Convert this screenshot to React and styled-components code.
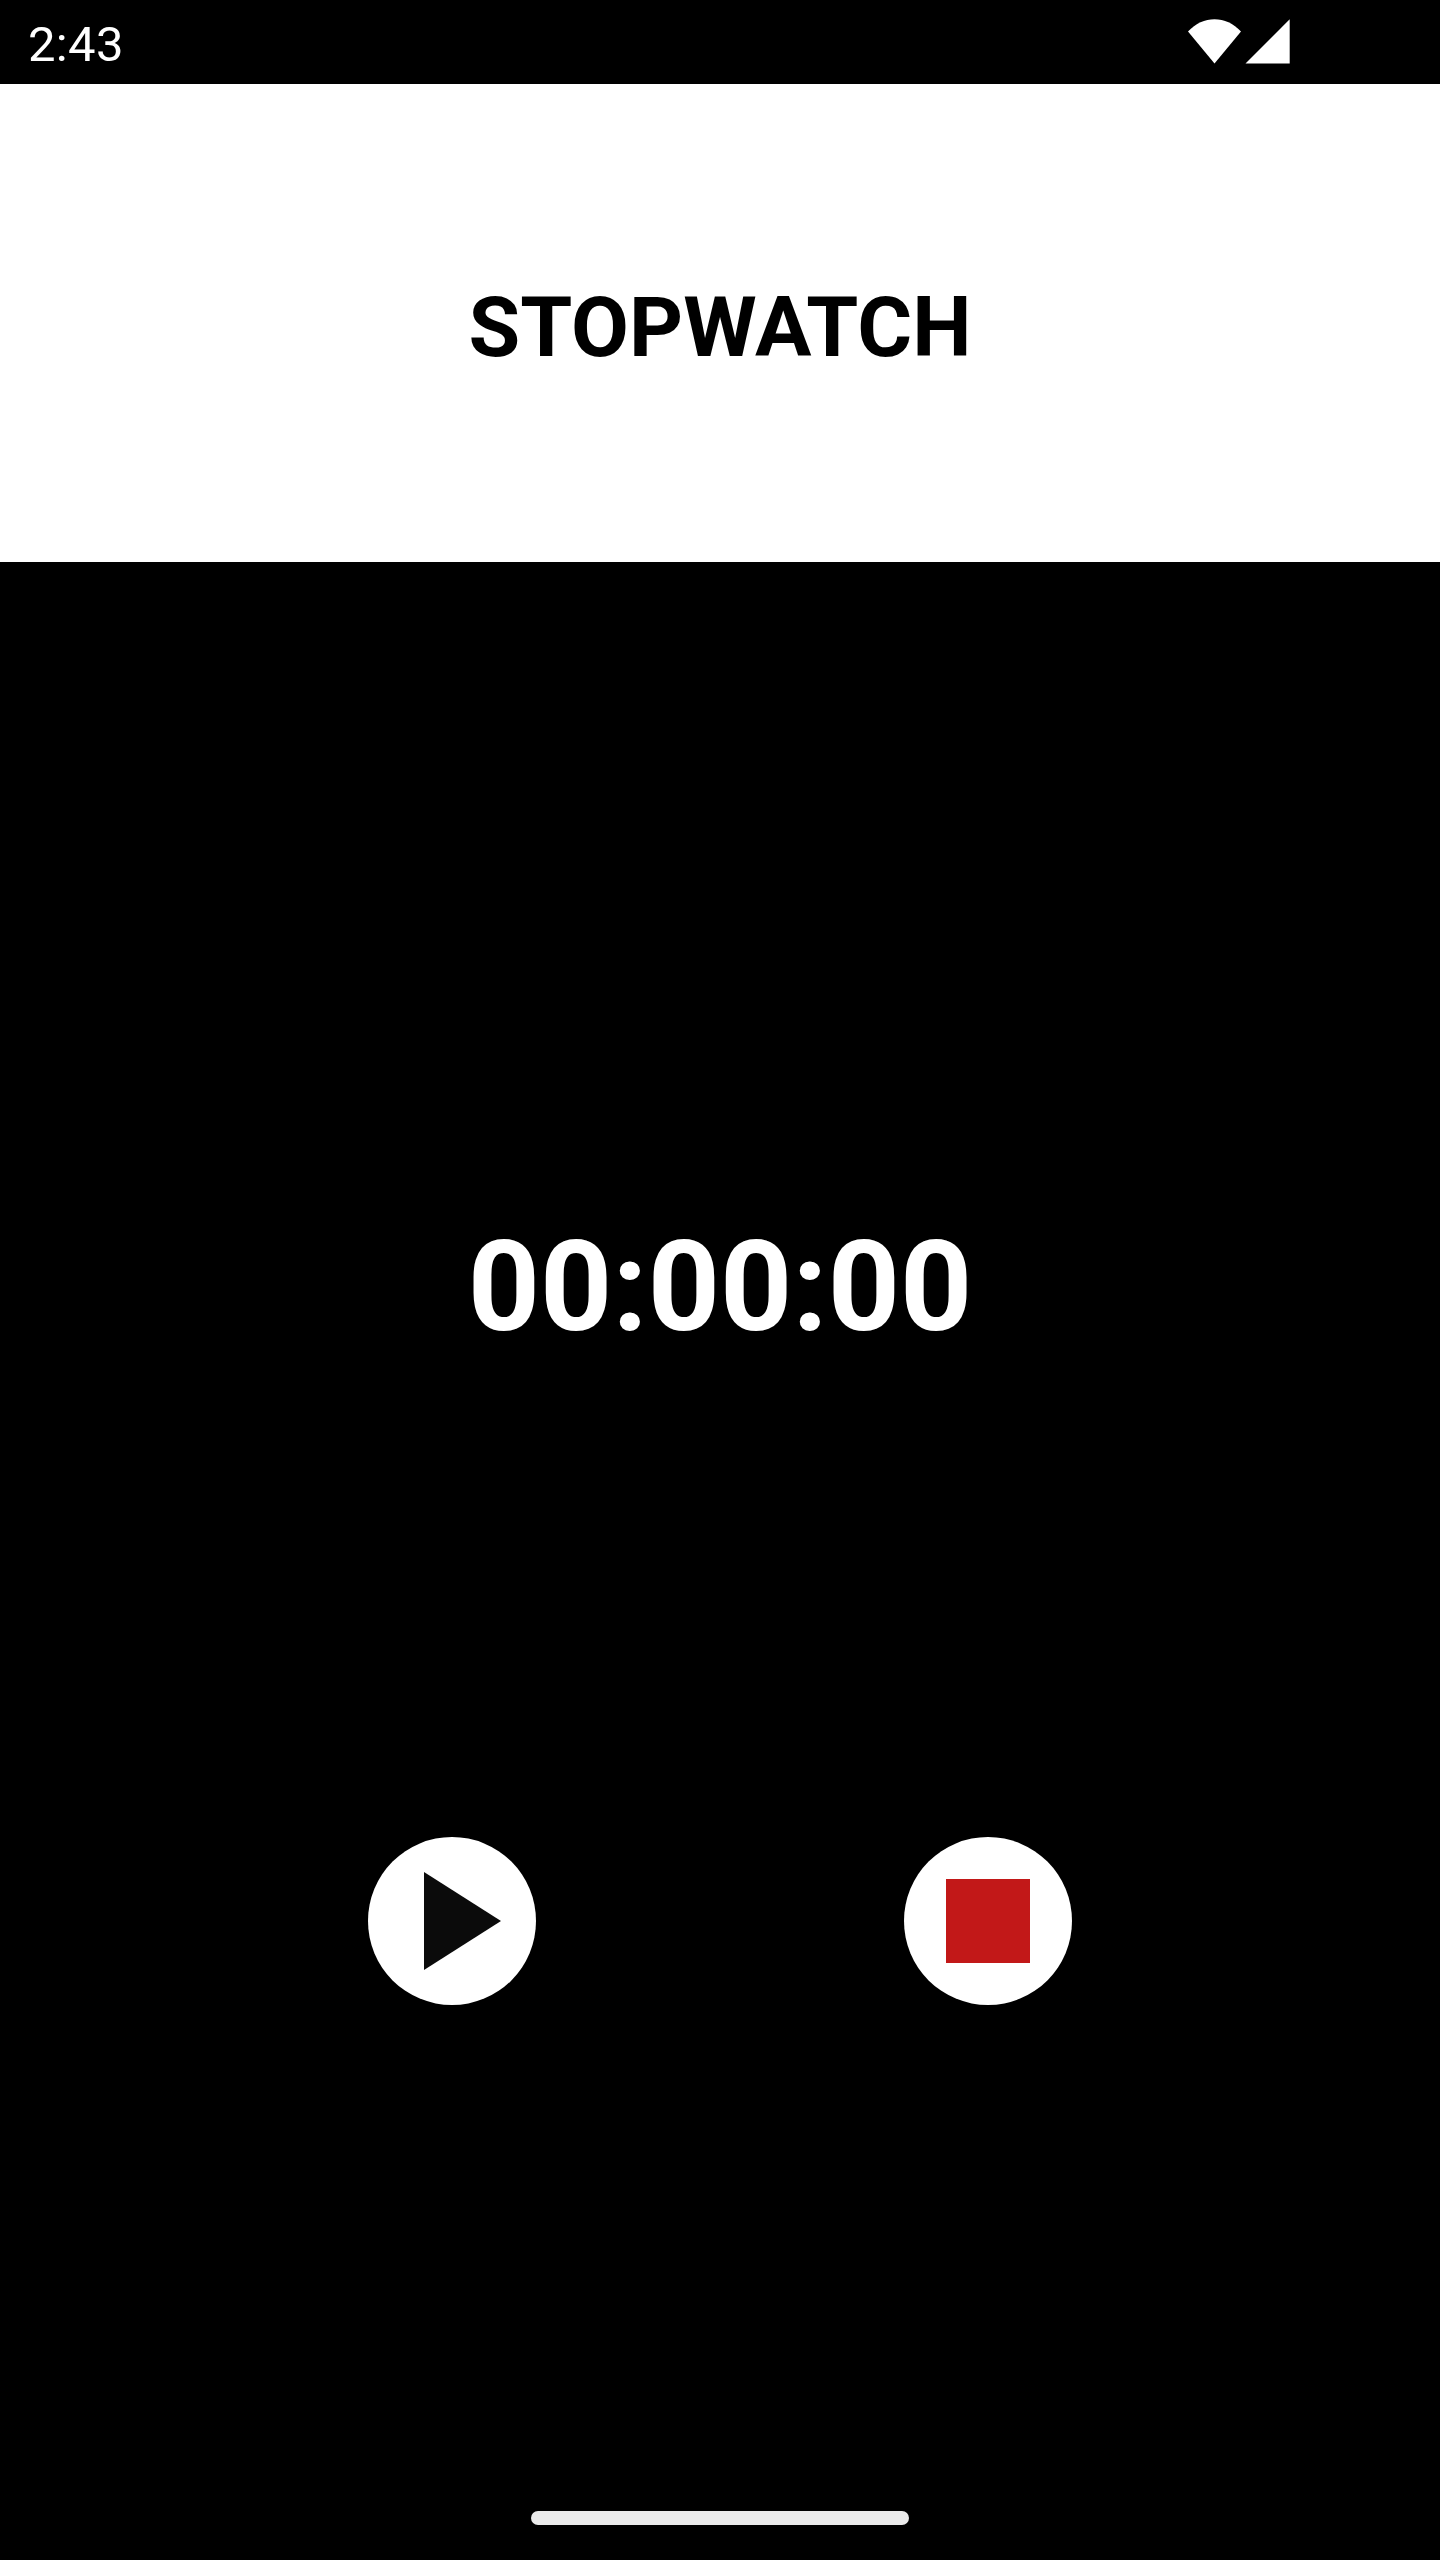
import React from "react";
import styled, { createGlobalStyle } from "styled-components";

const GlobalStyle = createGlobalStyle`
  * { box-sizing: border-box; }
  body { margin: 0; background: #000; }
`;

const Screen = styled.div`
  display: flex;
  flex-direction: column;
  width: 1440px;
  height: 2560px;
  background: #000;
  color: #fff;
  font-family: Roboto, "Liberation Sans", sans-serif;
  overflow: hidden;
`;

const StatusBar = styled.div`
  display: flex;
  flex: none;
  align-items: center;
  justify-content: space-between;
  height: 84px;
  padding: 5px 150px 0 28px;
`;

const Clock = styled.span`
  font-size: 49px;
  line-height: 57px;
  letter-spacing: 0.33px;
`;

const StatusIcons = styled.svg`
  display: block;
  width: 102px;
  height: 45px;
  margin-bottom: 6px;
  fill: #fff;
`;

const Header = styled.header`
  display: flex;
  flex: none;
  align-items: center;
  justify-content: center;
  height: 478px;
  padding-top: 9px;
  background: #fff;
  color: #000;
`;

const Title = styled.h1`
  margin: 0;
  font-size: 84px;
  font-weight: 700;
  line-height: 99px;
`;

const TimerArea = styled.main`
  display: flex;
  flex: none;
  align-items: center;
  justify-content: center;
  height: 1275px;
  padding-top: 175px;
`;

const Time = styled.div`
  font-size: 126px;
  font-weight: 700;
  line-height: 148px;
`;

const Controls = styled.div`
  display: flex;
  flex: 1;
  align-items: flex-start;
  justify-content: space-evenly;
`;

const RoundButton = styled.button`
  width: 168px;
  height: 168px;
  padding: 0;
  border: 0;
  border-radius: 50%;
  background: #fff;
`;

const Glyph = styled.svg`
  display: block;
  width: 168px;
  height: 168px;
  fill: ${(p) => p.$color};
`;

const NavBar = styled.div`
  display: flex;
  flex: none;
  align-items: center;
  justify-content: center;
  height: 84px;
`;

const HomeHandle = styled.div`
  width: 378px;
  height: 14px;
  border-radius: 7px;
  background: #ebebeb;
`;

export default function App() {
  return (
    <Screen>
      <GlobalStyle />
      <StatusBar>
        <Clock>2:43</Clock>
        <StatusIcons viewBox="0 0 102 45">
          <path d="M26.5 44.4L0 12.4C7.5 4.400 17 0.200 26.5 0.200S45.500 4.400 53 12.400Z" />
          <path d="M57.500 44.400H101.700V0.200Z" />
        </StatusIcons>
      </StatusBar>
      <Header>
        <Title>STOPWATCH</Title>
      </Header>
      <TimerArea>
        <Time>00:00:00</Time>
      </TimerArea>
      <Controls>
        <RoundButton aria-label="Start">
          <Glyph viewBox="0 0 168 168" $color="#0b0b0b">
            <path d="M56 35L133 84L56 133Z" />
          </Glyph>
        </RoundButton>
        <RoundButton aria-label="Stop">
          <Glyph viewBox="0 0 168 168" $color="#c21818">
            <path d="M42 42H126V126H42Z" />
          </Glyph>
        </RoundButton>
      </Controls>
      <NavBar>
        <HomeHandle />
      </NavBar>
    </Screen>
  );
}
